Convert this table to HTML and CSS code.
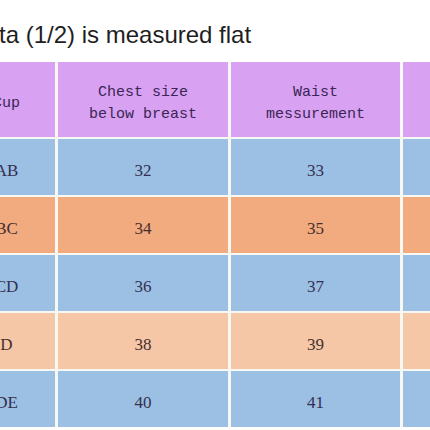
FILE: index.html
```html
<!DOCTYPE html>
<html lang="en">

<head>
    <meta charset="UTF-8">
    <meta name="viewport" content="width=device-width, initial-scale=1.0">
    <title>Size chart</title>
    <link rel="stylesheet" href="styles.css">
</head>

<body>
    <div class="chart">
        <h1 class="chart-title">ta (1/2) is measured flat</h1>

        <!-- Size table -->
        <div class="size-table">
            <div class="cell head">Cup</div>
            <div class="cell head">Chest size<br>below breast</div>
            <div class="cell head">Waist<br>messurement</div>
            <div class="cell head"></div>

            <div class="cell blue">AB</div>
            <div class="cell blue">32</div>
            <div class="cell blue">33</div>
            <div class="cell blue"></div>

            <div class="cell orange">BC</div>
            <div class="cell orange">34</div>
            <div class="cell orange">35</div>
            <div class="cell orange"></div>

            <div class="cell blue">CD</div>
            <div class="cell blue">36</div>
            <div class="cell blue">37</div>
            <div class="cell blue"></div>

            <div class="cell peach">D</div>
            <div class="cell peach">38</div>
            <div class="cell peach">39</div>
            <div class="cell peach"></div>

            <div class="cell blue">DE</div>
            <div class="cell blue">40</div>
            <div class="cell blue">41</div>
            <div class="cell blue"></div>
        </div>
    </div>
</body>

</html>
```

FILE: styles.css
```css
/* Global Styles */

* {
    box-sizing: border-box;
    margin: 0;
    padding: 0;
}

body,
html {
    background-color: #ffffff;
    width: 430px;
    height: 430px;
    overflow: hidden;
}

.chart {
    width: 430px;
    height: 430px;
    overflow: hidden;
    padding-top: 21px;
}

.chart-title {
    font-family: "Liberation Sans", Arial, sans-serif;
    font-weight: normal;
    font-size: 24px;
    line-height: 28px;
    color: #1f1f1f;
    margin-left: -1px;
    white-space: nowrap;
}

/* Table Styles */

.size-table {
    display: grid;
    grid-template-columns: 97px 170px 169px 170px;
    grid-template-rows: 75px repeat(5, 56px);
    column-gap: 3px;
    row-gap: 2px;
    margin-top: 13px;
    margin-left: -42px;
    width: 618px;
    background-color: #f7f8f1;
}

.cell {
    display: flex;
    align-items: center;
    justify-content: center;
    text-align: center;
    padding-top: 8px;
    font-family: "Liberation Serif", "Times New Roman", serif;
    font-size: 17px;
    color: #34304f;
}

.head {
    background-color: #d9a1f1;
    font-family: "Liberation Mono", "Courier New", monospace;
    font-size: 15px;
    line-height: 22px;
    color: #3a2656;
}

.blue {
    background-color: #9cbfe4;
}

.orange {
    background-color: #f2aa7f;
    color: #45302f;
}

.peach {
    background-color: #f6c7a6;
    color: #45302f;
}
```
